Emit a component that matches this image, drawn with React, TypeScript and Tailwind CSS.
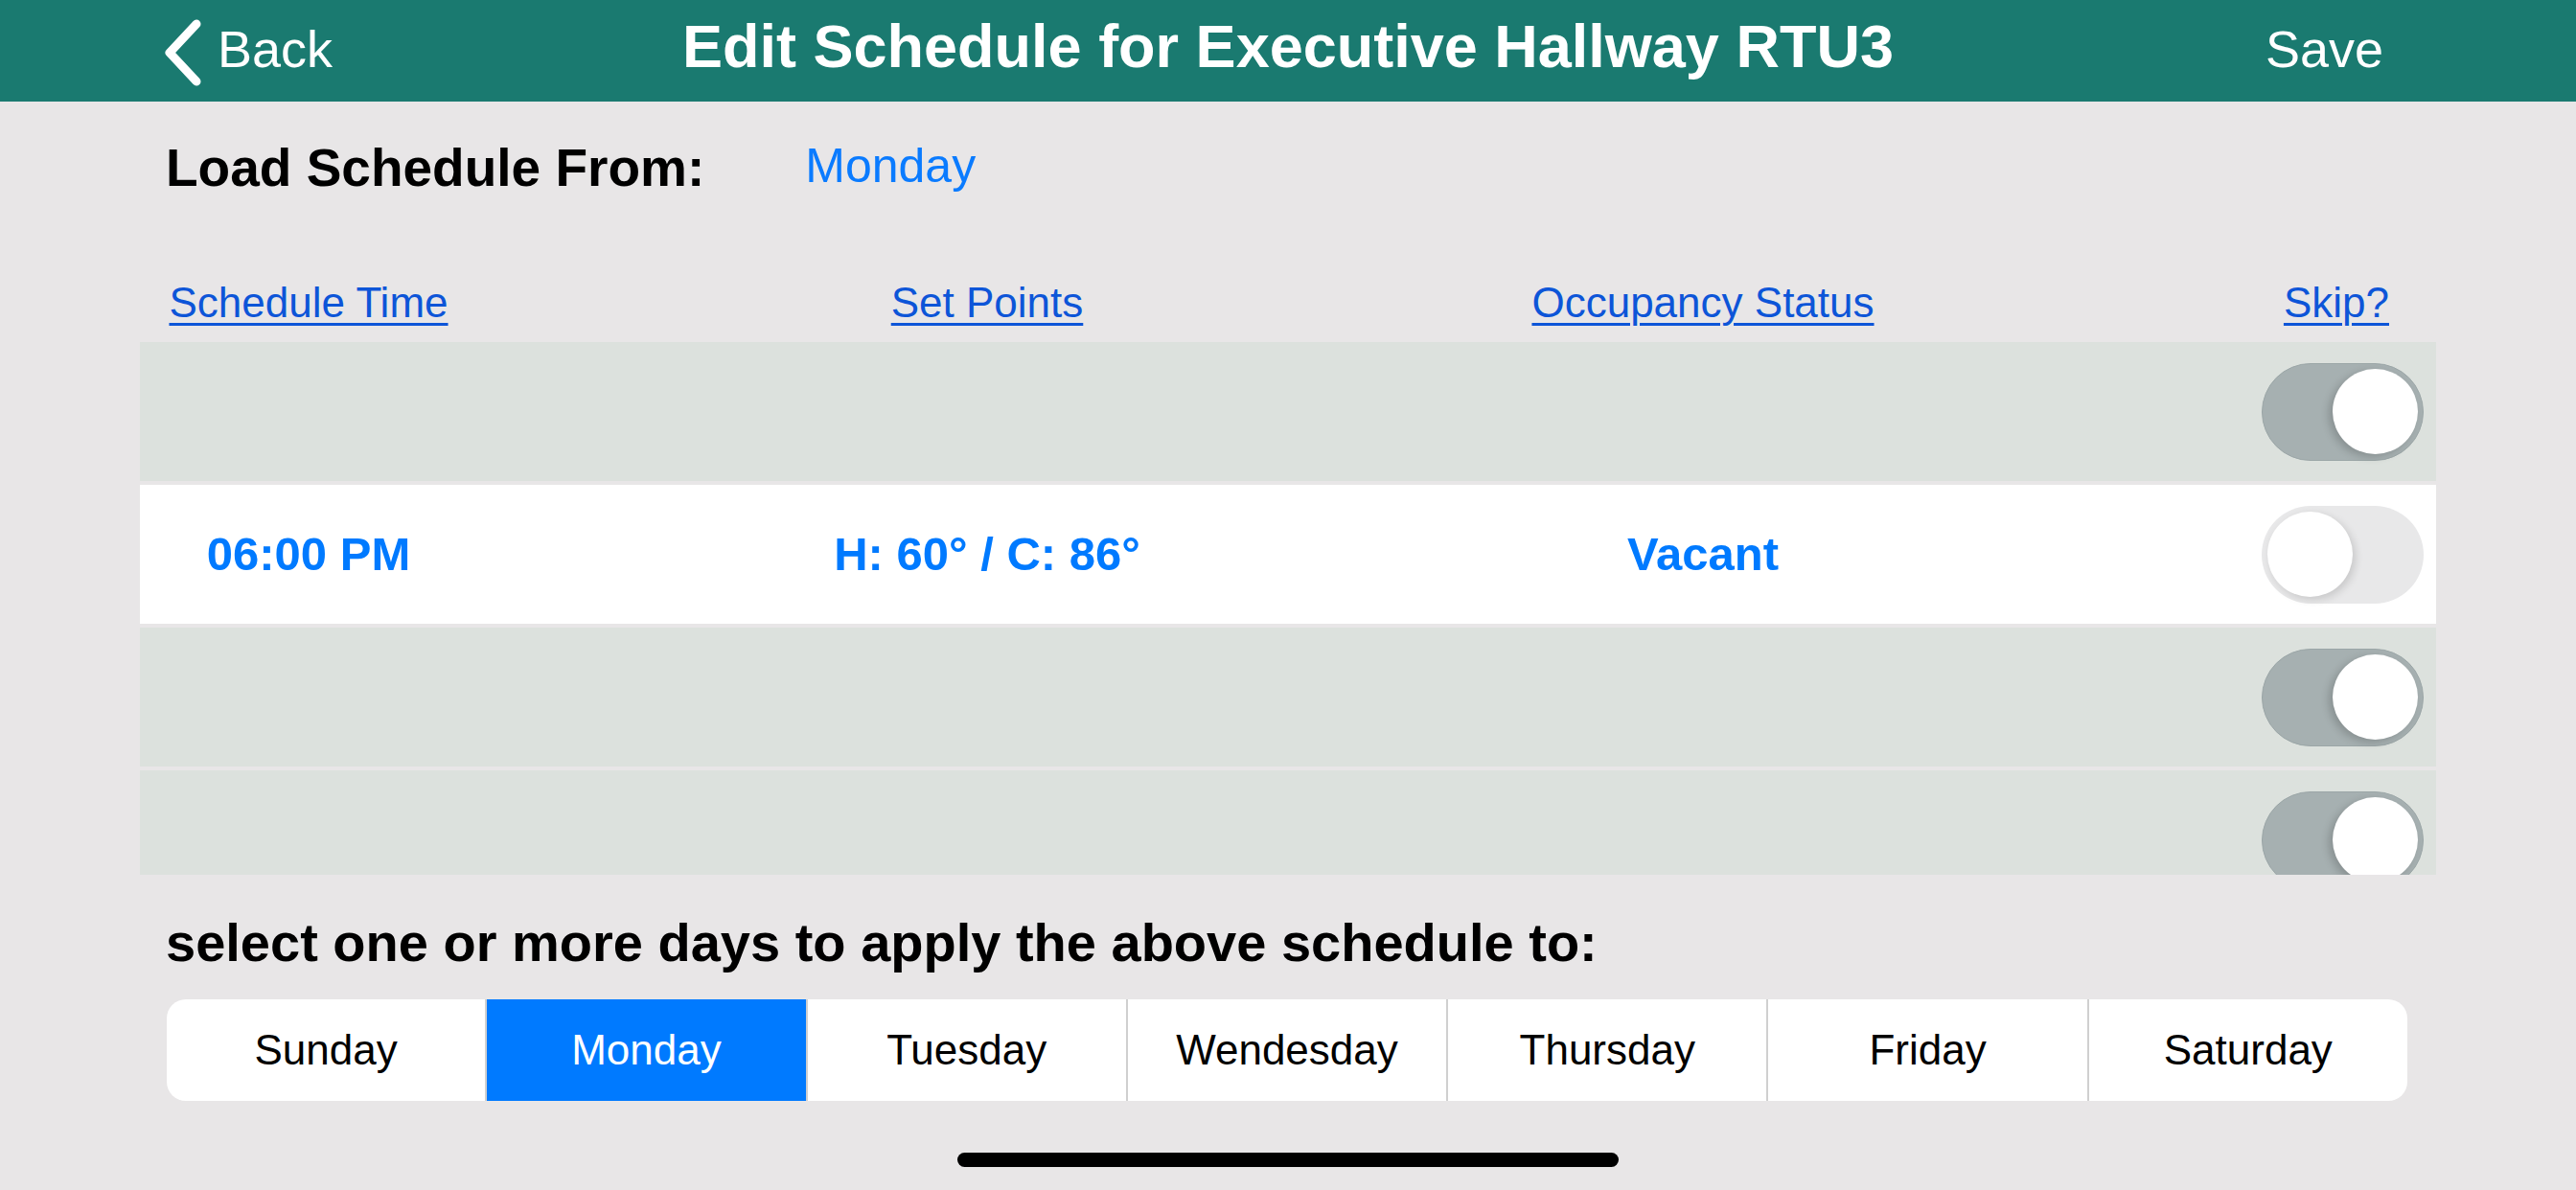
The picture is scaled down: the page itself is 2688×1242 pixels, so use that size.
import React from "react";

const FONT = "font-['Liberation_Sans','Arial',sans-serif]";

function Toggle({ on }: { on: boolean }) {
  if (on) {
    return (
      <div className="flex h-[102px] w-[169px] shrink-0 items-center justify-end rounded-full border border-[#9ba6a7] bg-[#a6b0b1] pr-[5px]">
        <div className="h-[89px] w-[89px] rounded-full bg-white shadow-[-4px_3px_8px_rgba(0,0,0,0.18)]" />
      </div>
    );
  }
  return (
    <div className="flex h-[102px] w-[169px] shrink-0 items-center justify-start rounded-full bg-[#e8e8e9] pl-[6px]">
      <div className="h-[89px] w-[89px] rounded-full bg-white shadow-[3px_3px_8px_rgba(0,0,0,0.14)]" />
    </div>
  );
}

function Row({
  filled,
  time,
  setPoints,
  status,
  on,
}: {
  filled?: boolean;
  time?: string;
  setPoints?: string;
  status?: string;
  on: boolean;
}) {
  return (
    <div
      className={`grid h-[145px] shrink-0 grid-cols-[352px_1064px_430px_1fr] ${
        filled ? "bg-white" : "bg-[#dce1dd]"
      } text-[49px] leading-none font-bold text-[#007aff]`}
    >
      <div className="flex h-[145px] items-center justify-center">{time}</div>
      <div className="flex h-[145px] items-center justify-center">{setPoints}</div>
      <div className="flex h-[145px] items-center justify-center">{status}</div>
      <div className="flex h-[145px] items-center justify-end pr-[13px]">
        <Toggle on={on} />
      </div>
    </div>
  );
}

const days = ["Sunday", "Monday", "Tuesday", "Wendesday", "Thursday", "Friday", "Saturday"];

export default function App() {
  return (
    <div className={`${FONT} flex h-[1242px] w-[2688px] flex-col overflow-hidden bg-[#e8e6e7]`}>
      {/* Nav bar */}
      <div className="grid h-[106px] shrink-0 grid-cols-[1fr_auto_1fr] items-start bg-[#1a7a70] text-white">
        <div className="flex items-start justify-start pl-[171px] pt-[20px]">
          <svg width="40" height="70" viewBox="0 0 40 70" className="mr-[16px]">
            <polyline
              points="34,5 6,35 34,65"
              fill="none"
              stroke="white"
              strokeWidth="9"
              strokeLinecap="round"
              strokeLinejoin="round"
            />
          </svg>
          <span className="mt-[4px] text-[54px] leading-none">Back</span>
        </div>
        <div className="pt-[17px] text-[63px] leading-none font-bold">Edit Schedule for Executive Hallway RTU3</div>
        <div className="flex justify-end pr-[201px] pt-[24px]">
          <span className="text-[54px] leading-none">Save</span>
        </div>
      </div>

      {/* Load schedule from */}
      <div className="mt-[42px] flex items-start pl-[173px]">
        <span className="text-[55px] leading-none font-bold text-black">Load Schedule From:</span>
        <span className="ml-[105px] text-[50px] leading-none text-[#0a7bff]">Monday</span>
      </div>

      {/* Column headers */}
      <div className="ml-[146px] mt-[91px] grid w-[2396px] grid-cols-[352px_1064px_430px_1fr] text-[44px] leading-none text-[#0d55d8]">
        <div className="flex justify-center">
          <span className="underline decoration-[3px] underline-offset-[6px]">Schedule Time</span>
        </div>
        <div className="flex justify-center">
          <span className="underline decoration-[3px] underline-offset-[6px]">Set Points</span>
        </div>
        <div className="flex justify-center">
          <span className="underline decoration-[3px] underline-offset-[6px]">Occupancy Status</span>
        </div>
        <div className="flex justify-end pr-[49px]">
          <span className="underline decoration-[3px] underline-offset-[6px]">Skip?</span>
        </div>
      </div>

      {/* Table */}
      <div className="ml-[146px] mt-[19px] flex h-[556px] w-[2396px] shrink-0 flex-col gap-[4px] overflow-hidden">
        <Row on={true} />
        <Row filled time="06:00 PM" setPoints="H: 60° / C: 86°" status="Vacant" on={false} />
        <Row on={true} />
        <Row on={true} />
      </div>

      {/* Apply days */}
      <div className="mt-[43px] pl-[173px] text-[56px] leading-none font-bold text-black">
        select one or more days to apply the above schedule to:
      </div>

      <div className="ml-[174px] mt-[31px] flex h-[106px] w-[2338px] shrink-0 overflow-hidden rounded-[20px] bg-white">
        {days.map((d, i) => (
          <div
            key={d}
            className={`flex flex-1 items-center justify-center text-[44px] leading-none ${
              i > 0 ? "border-l-2 border-[#d0d0d0]" : ""
            } ${d === "Monday" ? "bg-[#007aff] text-white" : "text-black"}`}
          >
            {d}
          </div>
        ))}
      </div>

      {/* Home indicator */}
      <div className="mt-[54px] flex justify-center">
        <div className="h-[15px] w-[690px] rounded-full bg-black" />
      </div>
    </div>
  );
}
